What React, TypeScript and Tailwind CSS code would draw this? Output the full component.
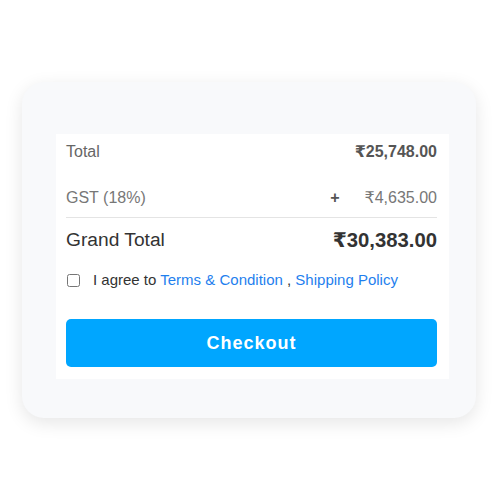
import { useState } from 'react';

const font = { fontFamily: '"Liberation Sans", Arial, "DejaVu Sans", sans-serif' };

export default function App() {
  const [agreed, setAgreed] = useState(false);

  return (
    <div className="w-[500px] h-[500px] bg-white pt-[82px] pl-[22px]" style={font}>
      <div className="w-[454px] h-[336px] rounded-[22px] bg-[#f8f9fb] shadow-[0_5px_18px_rgba(0,0,0,0.1)] pt-[52px] pl-[34px]">
        <div className="w-[393px] bg-white pl-[10px] pr-[12px] pb-[12px]">
          <div className="flex items-center justify-between h-[36px]">
            <span className="text-[16px] text-[#666]">Total</span>
            <span className="text-[16px] font-bold text-[#555]">₹25,748.00</span>
          </div>

          <div className="mt-[8px] flex items-center justify-between h-[40px] border-b border-[#e4e4e4]">
            <span className="text-[16px] text-[#777]">GST (18%)</span>
            <div className="flex items-center">
              <span className="text-[16px] font-bold text-[#555] mr-[25px]">+</span>
              <span className="text-[16px] text-[#777]">₹4,635.00</span>
            </div>
          </div>

          <div className="flex items-center justify-between h-[44px]">
            <span className="text-[19.2px] text-[#333]">Grand Total</span>
            <span className="text-[20.3px] font-bold text-[#333]">₹30,383.00</span>
          </div>

          <label className="flex items-center h-[36px] text-[15px] text-[#333]">
            <input
              type="checkbox"
              checked={agreed}
              onChange={(e) => setAgreed(e.target.checked)}
              className="w-[13px] h-[13px] ml-[1px] mr-[13px]"
            />
            <span>
              I agree to <a href="#" className="text-[#1f7fee]">Terms &amp; Condition</a> ,{' '}
              <a href="#" className="text-[#1f7fee]">Shipping Policy</a>
            </span>
          </label>

          <button className="mt-[21px] w-full h-[48px] rounded-[5px] bg-[#00a6ff] text-white text-[18px] font-bold tracking-[1px]">
            Checkout
          </button>
        </div>
      </div>
    </div>
  );
}
